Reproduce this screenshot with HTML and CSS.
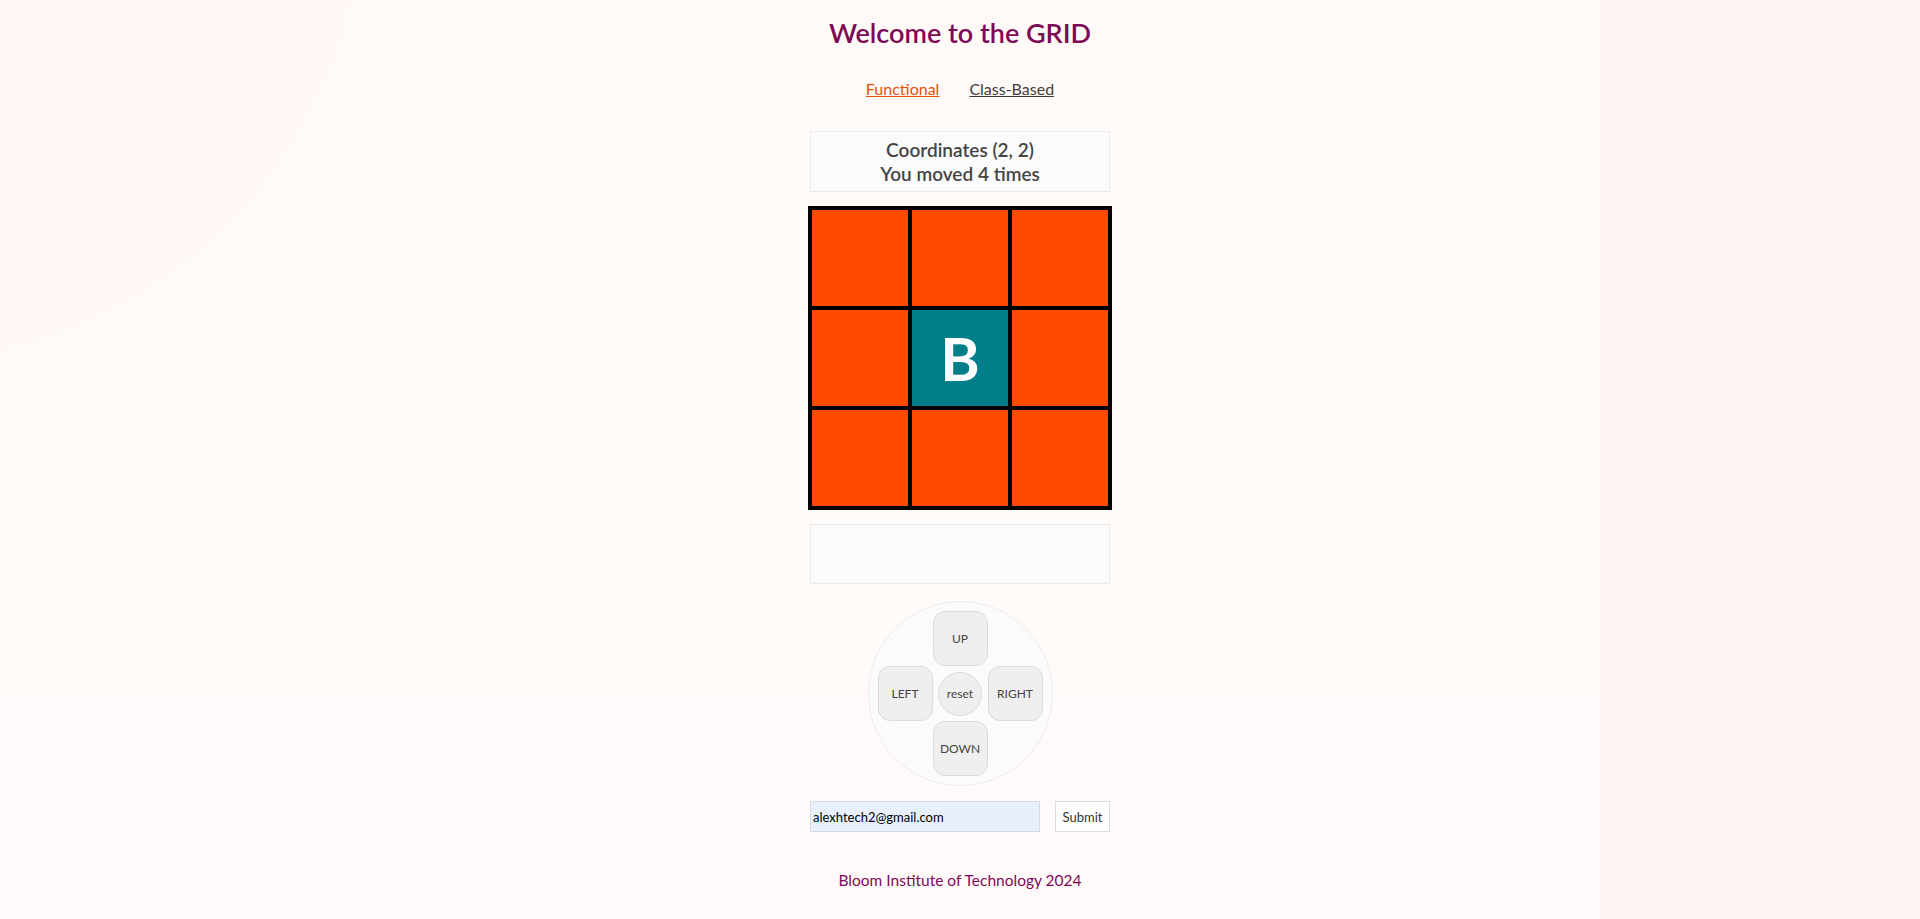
FILE: index.html
```html
<!DOCTYPE html>
<html lang="en">
<head>
<meta charset="utf-8">
<title>Grid</title>
<link rel="stylesheet" href="styles.css">
</head>
<body>
<div class="bg"></div>
<main class="app">
  <h1 class="title">Welcome to the GRID</h1>
  <nav class="nav">
    <a class="nav-link active" href="#">Functional</a>
    <a class="nav-link" href="#">Class-Based</a>
  </nav>
  <div class="info">
    <div class="info-line">Coordinates (2, 2)</div>
    <div class="info-line">You moved 4 times</div>
  </div>
  <div class="grid">
    <div class="square"></div>
    <div class="square"></div>
    <div class="square"></div>
    <div class="square"></div>
    <div class="square active">B</div>
    <div class="square"></div>
    <div class="square"></div>
    <div class="square"></div>
    <div class="square"></div>
  </div>
  <div class="message"></div>
  <div class="keypad">
    <div class="keys">
      <button class="key key-up">UP</button>
      <button class="key key-left">LEFT</button>
      <button class="key key-reset">reset</button>
      <button class="key key-right">RIGHT</button>
      <button class="key key-down">DOWN</button>
    </div>
  </div>
  <form class="form">
    <input class="email" type="email" value="alexhtech2@gmail.com">
    <button class="submit" type="button">Submit</button>
  </form>
  <footer class="footer">Bloom Institute of Technology 2024</footer>
</main>
</body>
</html>
```
FILE: styles.css
```css
html, body {
  margin: 0;
  padding: 0;
}
body {
  background: #fef5f3;
  font-family: Lato, "Noto Sans", sans-serif;
  min-height: 919px;
  position: relative;
}
.bg {
  position: absolute;
  left: 0;
  top: 0;
  width: 1600px;
  height: 919px;
  background:
    radial-gradient(circle 467px at -100px -100px, #fff5f4 0%, #fff6f5 97%, rgba(255,250,248,0) 100%),
    linear-gradient(180deg, #fffaf8 0%, #fffbf9 60%, #fff9f9 100%);
  z-index: 0;
}
.app {
  position: relative;
  z-index: 1;
  display: flex;
  flex-direction: column;
  align-items: center;
}
.title {
  margin: 13px 0 0;
  font-size: 27px;
  line-height: 40px;
  font-weight: 600;
  color: #7d0a55;
}
.nav {
  margin-top: 26px;
  display: flex;
  gap: 30px;
  height: 20px;
  line-height: 20px;
  font-size: 16px;
}
.nav-link {
  color: #3d3d3d;
  text-decoration: underline;
}
.nav-link.active {
  color: #e6500f;
}
.info {
  margin-top: 32px;
  box-sizing: border-box;
  width: 300px;
  height: 61px;
  border: 1px solid #ebebeb;
  background: #fbfbfb;
  display: flex;
  flex-direction: column;
  justify-content: center;
  align-items: center;
  color: #454545;
  font-size: 19px;
  font-weight: 600;
  line-height: 24px;
}
.grid {
  margin-top: 14px;
  display: grid;
  grid-template-columns: repeat(3, 96px);
  grid-auto-rows: 96px;
  gap: 4px;
  padding: 4px;
  background: #000;
}
.square {
  background: #ff4a00;
  display: flex;
  align-items: center;
  justify-content: center;
  color: #fff;
  font-size: 60px;
  font-weight: 700;
}
.square.active {
  background: #007f8a;
}
.message {
  margin-top: 14px;
  box-sizing: border-box;
  width: 300px;
  height: 60px;
  border: 1px solid #ebebeb;
  background: #fbfbfb;
}
.keypad {
  margin-top: 17px;
  box-sizing: border-box;
  width: 185px;
  height: 185px;
  border: 1px solid #ececec;
  border-radius: 50%;
  background: #fcfbfb;
  display: flex;
  align-items: center;
  justify-content: center;
}
.keys {
  display: grid;
  grid-template-columns: repeat(3, 55px);
  grid-template-rows: repeat(3, 55px);
}
.key {
  box-sizing: border-box;
  margin: 0;
  padding: 0;
  border: 1px solid #dcdcdc;
  background: #efefef;
  border-radius: 12px;
  font-family: inherit;
  font-size: 12px;
  font-weight: 400;
  color: #444;
}
.key-up { grid-column: 2; grid-row: 1; }
.key-left { grid-column: 1; grid-row: 2; }
.key-reset {
  grid-column: 2;
  grid-row: 2;
  width: 44px;
  height: 44px;
  border-radius: 50%;
  align-self: center;
  justify-self: center;
}
.key-right { grid-column: 3; grid-row: 2; }
.key-down { grid-column: 2; grid-row: 3; }
.form {
  margin: 15px 0 0;
  display: flex;
  gap: 15px;
  width: 300px;
}
.email {
  box-sizing: border-box;
  width: 230px;
  height: 31px;
  margin: 0;
  padding: 0 2px;
  border: 1px solid #d6dbe3;
  background: #e8f0fe;
  font-family: inherit;
  font-size: 13px;
  color: #000;
}
.submit {
  box-sizing: border-box;
  width: 55px;
  height: 31px;
  margin: 0;
  padding: 0;
  border: 1px solid #dcdcdc;
  background: #fff;
  font-family: inherit;
  font-size: 13px;
  color: #333;
}
.footer {
  margin-top: 38px;
  line-height: 20px;
  font-size: 15.5px;
  color: #7d0a55;
}
```
